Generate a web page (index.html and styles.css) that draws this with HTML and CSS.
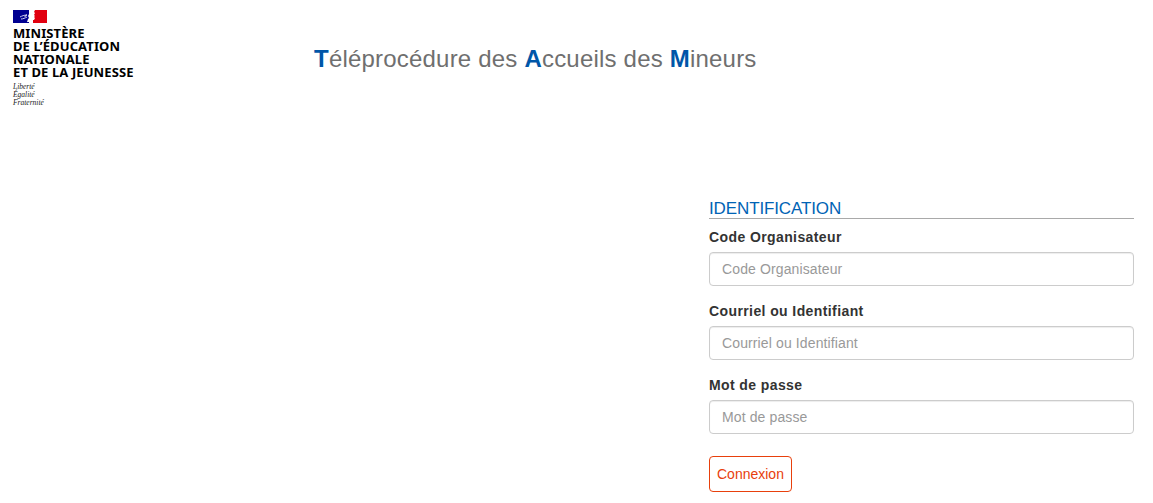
FILE: index.html
```html
<!DOCTYPE html>
<html lang="fr">

<head>
    <meta charset="UTF-8">
    <meta name="viewport" content="width=device-width, initial-scale=1.0">
    <title>Téléprocédure des Accueils des Mineurs</title>
    <link rel="stylesheet" href="styles.css">
</head>

<body>
    <header class="header">
        <div class="logo">
            <svg class="flag" width="34" height="13" viewBox="0 0 34 13">
                <rect width="16" height="13" fill="#000091" />
                <rect x="20" width="14" height="13" fill="#e1000f" />
                <path d="M16 0h6l-1 2 1 1-1 2 1 1-1 1 1 1-1 2-2 0 0 2h-5l1-3 1-1-1-2 1-2z" fill="#fff" />
                <path d="M7 7c2-1 4-2 7-2M8 9c2 0 4-1 6-2" fill="none" stroke="#cfd0ee" stroke-width="1" />
                <path d="M14 5c-1 0-2 1-2 2" fill="none" stroke="#fff" stroke-width="1" />
            </svg>
            <div class="logo-name">MINISTÈRE<br>DE L’ÉDUCATION<br>NATIONALE<br>ET DE LA JEUNESSE</div>
            <div class="logo-motto">Liberté<br>Égalité<br>Fraternité</div>
        </div>
        <h1 class="title"><b>T</b>éléprocédure des <b>A</b>ccueils des <b>M</b>ineurs</h1>
    </header>

    <main class="main">
        <form class="login">
            <h2>IDENTIFICATION</h2>
            <div class="form-group">
                <label for="code">Code Organisateur</label>
                <input type="text" id="code" placeholder="Code Organisateur">
            </div>
            <div class="form-group">
                <label for="user">Courriel ou Identifiant</label>
                <input type="text" id="user" placeholder="Courriel ou Identifiant">
            </div>
            <div class="form-group">
                <label for="pass">Mot de passe</label>
                <input type="password" id="pass" placeholder="Mot de passe">
            </div>
            <button type="submit">Connexion</button>
        </form>
    </main>
</body>

</html>
```

FILE: styles.css
```css
body {
    margin: 0;
    font-family: "Liberation Sans", Arial, sans-serif;
    font-size: 14px;
    color: #333;
    background: #fff;
}

.header {
    display: flex;
    height: 199px;
    padding: 10px 0 0 13px;
    box-sizing: border-box;
}

.logo {
    width: 301px;
    flex: none;
}

.flag {
    display: block;
}

.logo-name {
    margin-top: 4px;
    font-family: "Noto Sans", sans-serif;
    font-size: 13px;
    font-weight: 700;
    line-height: 13px;
    letter-spacing: 0.1px;
    color: #000;
}

.logo-motto {
    margin-top: 4px;
    font-family: "Liberation Serif", serif;
    font-size: 7.5px;
    font-style: italic;
    line-height: 8px;
    color: #222;
}

.title {
    margin: 34px 0 0;
    font-size: 24px;
    font-weight: 400;
    line-height: 30px;
    letter-spacing: 0.2px;
    color: #6f6f6f;
}

.title b {
    color: #0056a8;
}

.main {
    display: flex;
    justify-content: flex-end;
    padding-right: 19px;
}

.login {
    width: 425px;
}

h2 {
    margin: 0 0 10px;
    font-size: 17px;
    font-weight: 400;
    line-height: 19px;
    letter-spacing: -0.12px;
    color: #0063b5;
    border-bottom: 1px solid #a9a9a9;
}

.form-group {
    margin-bottom: 17px;
}

label {
    display: block;
    margin-bottom: 6px;
    font-weight: 700;
    line-height: 17px;
    letter-spacing: 0.4px;
}

input {
    display: block;
    width: 100%;
    height: 34px;
    padding: 6px 12px;
    box-sizing: border-box;
    font-family: inherit;
    font-size: 14px;
    border: 1px solid #ccc;
    border-radius: 4px;
    box-shadow: inset 0 1px 1px rgba(0, 0, 0, .075);
}

input::placeholder {
    color: #999;
    letter-spacing: 0.12px;
}

button {
    height: 36px;
    margin-top: 5px;
    padding: 0 7px;
    font-family: inherit;
    font-size: 14px;
    color: #e8400c;
    background: #fff;
    border: 1px solid #e8400c;
    border-radius: 4px;
    cursor: pointer;
}
```
